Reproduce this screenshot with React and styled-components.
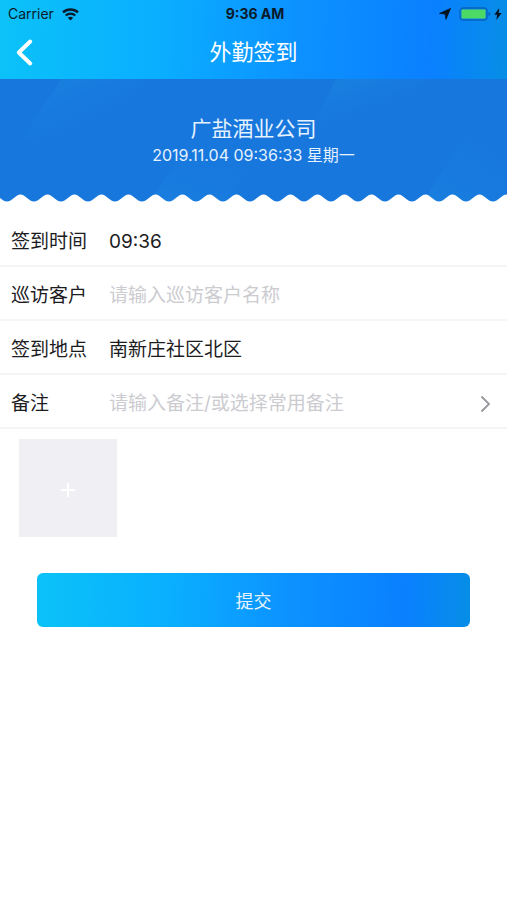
import React from 'react';
import styled, { createGlobalStyle } from 'styled-components';

const GlobalStyle = createGlobalStyle`
    * {
        box-sizing: border-box;
    }
    body {
        margin: 0;
        background: #fff;
        color: #1c1c1e;
        font-family: Inter, 'Noto Sans CJK SC', sans-serif;
    }
    button, input {
        font-family: inherit;
    }
`;

const brandGradient = `linear-gradient(
    92deg,
    #0bc2f8 0%,
    #0aaeff 32%,
    #0c92ff 58%,
    #0a80ff 85%,
    #068ee6 100%
)`;

const Header = styled.header`
    background: ${brandGradient};
`;

const StatusBar = styled.div`
    display: grid;
    grid-template-columns: 1fr auto 1fr;
    align-items: center;
    height: 28px;
    padding: 0 5px 0 8px;
    color: #0b1a2b;
    font-size: 14px;
    line-height: 20px;
`;

const StatusGroup = styled.div`
    display: flex;
    align-items: center;
    justify-content: ${({ $end }) => ($end ? 'flex-end' : 'flex-start')};
    gap: 8px;
`;

const Clock = styled.span`
    font-weight: 700;
`;

const BatteryGroup = styled.span`
    display: flex;
    align-items: center;
    gap: 3px;
`;

const NavBar = styled.div`
    display: grid;
    grid-template-columns: 48px 1fr 48px;
    align-items: center;
    height: 51px;
    padding-bottom: 3px;
`;

const BackButton = styled.button`
    display: flex;
    align-items: center;
    height: 48px;
    padding: 0 0 0 16px;
    border: none;
    background: none;
    color: #fff;
    cursor: pointer;
`;

const Title = styled.h1`
    margin: 0;
    color: #fff;
    font-size: 22px;
    font-weight: 400;
    line-height: 32px;
    text-align: center;
`;

const Banner = styled.section`
    position: relative;
    background: #1777dd;
    color: #e6f2ff;
    text-align: center;
`;

const BannerShapes = styled.svg`
    position: absolute;
    inset: 0;
    width: 100%;
    height: 100%;
`;

const BannerText = styled.div`
    position: relative;
    padding: 34px 16px 29px;
`;

const Company = styled.h2`
    margin: 0;
    font-size: 21px;
    font-weight: 400;
    line-height: 32px;
`;

const DateLine = styled.p`
    margin: 0;
    font-size: 16px;
    line-height: 20px;
`;

const WaveEdge = styled.svg`
    position: relative;
    display: block;
    width: 100%;
    height: 9px;
`;

const Form = styled.form`
    padding-top: 10px;
`;

const Row = styled.div`
    display: flex;
    align-items: center;
    height: 54px;
    padding: 5px 16px 0 11px;
    border-bottom: 2px solid #f5f5f7;
    font-size: 19px;
    line-height: 28px;
`;

const Label = styled.label`
    flex: none;
    width: 98px;
`;

const Field = styled.input`
    flex: 1;
    min-width: 0;
    padding: 0;
    border: none;
    outline: none;
    background: none;
    color: inherit;
    font-size: inherit;
    line-height: inherit;

    &::placeholder {
        color: #cbcbd0;
        opacity: 1;
    }
`;

const PickButton = styled.button`
    display: flex;
    padding: 0;
    border: none;
    background: none;
    color: #98989d;
    cursor: pointer;
`;

const PhotoArea = styled.div`
    padding: 10px 19px 0;
`;

const AddPhoto = styled.button`
    display: flex;
    align-items: center;
    justify-content: center;
    width: 98px;
    height: 98px;
    padding: 4px 0 0;
    border: none;
    background: #efeff4;
    color: #fff;
    cursor: pointer;
`;

const SubmitArea = styled.div`
    padding: 36px 37px;
`;

const SubmitButton = styled.button`
    width: 100%;
    height: 54px;
    padding: 3px 0 0;
    border: none;
    border-radius: 6px;
    background: ${brandGradient};
    color: #e6f4ff;
    font-size: 18px;
    line-height: 28px;
    cursor: pointer;
`;

const WifiIcon = () => (
    <svg width="17" height="13" viewBox="0 0 17 13" fill="none" aria-hidden="true">
        <path d="M1 4.300C5.100.5 11.900.5 16 4.300" stroke="currentColor" strokeWidth="2.400" />
        <path d="M3.700 7.500c2.600-2.500 7-2.500 9.600 0" stroke="currentColor" strokeWidth="2.300" />
        <path d="M8.500 12.400 5.700 9.700c1.500-1.400 4.100-1.400 5.600 0z" fill="currentColor" />
    </svg>
);

const LocationIcon = () => (
    <svg width="12" height="12" viewBox="0 0 12 12" aria-hidden="true">
        <path d="M11.500.5 7 11.300 6.200 6 .5 5.400z" fill="#04111f" stroke="#04111f" strokeWidth="0.800" strokeLinejoin="round" />
    </svg>
);

const BatteryIcon = () => (
    <svg width="32" height="14" viewBox="0 0 32 14" aria-hidden="true">
        <rect x="1" y="1" width="27" height="12" rx="3" fill="none" stroke="#0a62bd" strokeWidth="1.300" />
        <rect x="2.500" y="2.500" width="24" height="9" rx="1" fill="#4cd964" />
        <path d="M29.600 5c2 .5 2 3.500 0 4z" fill="#0a59ad" />
    </svg>
);

const BoltIcon = () => (
    <svg width="8" height="12" viewBox="0 0 8 12" aria-hidden="true">
        <path d="M5.200 0 .3 6.700h2.900L2.300 12 7.700 4.900H4.700z" fill="#04111f" />
    </svg>
);

const BackIcon = () => (
    <svg width="17" height="27" viewBox="0 0 17 27" fill="none" aria-hidden="true">
        <path d="M14.200 2.500 2.800 13.500 14.200 24.500" stroke="currentColor" strokeWidth="3.900" strokeLinecap="round" strokeLinejoin="round" />
    </svg>
);

const ChevronIcon = () => (
    <svg width="11" height="18" viewBox="0 0 11 18" fill="none" aria-hidden="true">
        <path d="M1.500 1.500 9 9l-7.500 7.500" stroke="currentColor" strokeWidth="1.800" />
    </svg>
);

const PlusIcon = () => (
    <svg width="16" height="16" viewBox="0 0 16 16" fill="none" aria-hidden="true">
        <path d="M8 1v14M1 8h14" stroke="currentColor" strokeWidth="2" />
    </svg>
);

const Shapes = () => (
    <BannerShapes viewBox="0 0 507 124" preserveAspectRatio="none" aria-hidden="true">
        <defs>
            <linearGradient id="shine" x1="0" y1="0" x2="1" y2="1">
                <stop offset="0.2" stopColor="#1c8be2" stopOpacity="0.4" />
                <stop offset="0.65" stopColor="#1777dd" stopOpacity="0" />
            </linearGradient>
            <linearGradient id="glow" x1="0" y1="1" x2="0.7" y2="0">
                <stop offset="0" stopColor="#1c8be2" stopOpacity="0.45" />
                <stop offset="1" stopColor="#1777dd" stopOpacity="0" />
            </linearGradient>
        </defs>
        <path d="M62 0H150L95 62H20z" fill="url(#shine)" />
        <path d="M336 0H430L390 44H314z" fill="url(#shine)" />
        <path d="M148 124 194 60h70l-36 64z" fill="url(#glow)" />
        <path d="M422 124 470 50l37 40v34z" fill="url(#glow)" />
    </BannerShapes>
);

const Wave = () => (
    <WaveEdge aria-hidden="true">
        <defs>
            <pattern id="wave" x="7" y="0" width="27" height="9" patternUnits="userSpaceOnUse">
                <path d="M0 7.500C5 7.500 9 .5 13.500.5S22 7.500 27 7.500V9H0z" fill="#fff" />
            </pattern>
        </defs>
        <rect width="100%" height="9" fill="url(#wave)" />
    </WaveEdge>
);

const App = () => {
    return (
        <>
            <GlobalStyle />
            <Header>
                <StatusBar>
                    <StatusGroup>
                        <span>Carrier</span>
                        <WifiIcon />
                    </StatusGroup>
                    <Clock>9:36 AM</Clock>
                    <StatusGroup $end>
                        <LocationIcon />
                        <BatteryGroup>
                            <BatteryIcon />
                            <BoltIcon />
                        </BatteryGroup>
                    </StatusGroup>
                </StatusBar>
                <NavBar>
                    <BackButton type="button" aria-label="返回">
                        <BackIcon />
                    </BackButton>
                    <Title>外勤签到</Title>
                </NavBar>
            </Header>
            <main>
                <Banner>
                    <Shapes />
                    <BannerText>
                        <Company>广盐酒业公司</Company>
                        <DateLine>2019.11.04 09:36:33 星期一</DateLine>
                    </BannerText>
                    <Wave />
                </Banner>
                <Form onSubmit={(e) => e.preventDefault()}>
                    <Row>
                        <Label htmlFor="time">签到时间</Label>
                        <Field id="time" defaultValue="09:36" readOnly />
                    </Row>
                    <Row>
                        <Label htmlFor="customer">巡访客户</Label>
                        <Field id="customer" placeholder="请输入巡访客户名称" />
                    </Row>
                    <Row>
                        <Label htmlFor="place">签到地点</Label>
                        <Field id="place" defaultValue="南新庄社区北区" readOnly />
                    </Row>
                    <Row>
                        <Label htmlFor="remark">备注</Label>
                        <Field id="remark" placeholder="请输入备注/或选择常用备注" />
                        <PickButton type="button" aria-label="选择常用备注">
                            <ChevronIcon />
                        </PickButton>
                    </Row>
                    <PhotoArea>
                        <AddPhoto type="button" aria-label="添加照片">
                            <PlusIcon />
                        </AddPhoto>
                    </PhotoArea>
                    <SubmitArea>
                        <SubmitButton type="submit">提交</SubmitButton>
                    </SubmitArea>
                </Form>
            </main>
        </>
    );
};

export default App;
